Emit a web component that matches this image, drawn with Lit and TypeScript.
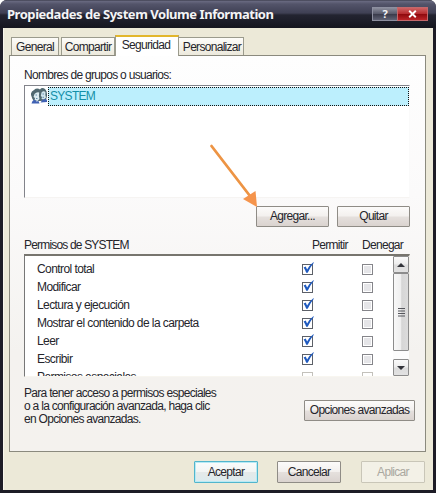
import { LitElement, html, css, svg } from "lit";
import { customElement, property } from "lit/decorators.js";

@customElement("check-box")
class CheckBox extends LitElement {
  @property({ type: Boolean }) checked = false;
  @property({ type: Boolean }) faded = false;
  static styles = css`
    :host { display: block; width: 11px; height: 11px; }
    svg { display: block; overflow: visible; }
  `;
  render() {
    const edge = this.faded ? "#c3c1bb" : this.checked ? "#5c6068" : "#85858a";
    return html`<svg width="11" height="11" viewBox="0 0 11 11">
      <rect x=".5" y=".5" width="10" height="10" fill="#fff" stroke=${edge} />
      ${this.checked
        ? svg`<path d="M1.6 3.4 L3.7 2.6 L5.1 5.4 Q7.5 1.300 11.300 -1.700 L11.900 -1.200 Q8.300 3 5.700 8.800 L4.200 8.800 Q3.300 5.800 1.600 3.400Z" fill="#1f5abf" />`
        : this.faded ? "" : svg`<rect x="2" y="2" width="7" height="7" fill="#e5e5e8" />`}
    </svg>`;
  }
}

const PERMS = [
  { name: "Control total", on: true },
  { name: "Modificar", on: true },
  { name: "Lectura y ejecución", on: true },
  { name: "Mostrar el contenido de la carpeta", on: true },
  { name: "Leer", on: true },
  { name: "Escribir", on: true },
  { name: "Permisos especiales", on: false },
];

@customElement("app-root")
class AppRoot extends LitElement {
  static styles = css`
    * { box-sizing: border-box; }
    :host {
      display: block; width: 436px; height: 493px; overflow: hidden; background: #fff;
      font: 12px/14px "Liberation Sans", Arial, sans-serif; letter-spacing: -.7px; color: #25252b; white-space: nowrap;
    }
    .window {
      position: relative; height: 493px; display: flex; flex-direction: column;
      background: #1d1c26; border-radius: 7px 7px 0 0; overflow: hidden; padding: 0 3px 3px;
    }
    .title {
      height: 28px; flex: none; margin: 0 -3px; padding: 0 8px 0 7px; display: flex; align-items: center; justify-content: space-between;
      background: linear-gradient(#30313f 0, #6a6b82 1px, #53546a 4px, #3f4054 13px, #232431 15px, #161720 27px);
      font: bold 13px/16px "Noto Sans", sans-serif; color: #f4f4f6; letter-spacing: 0;
    }
    .caption { letter-spacing: -.46px; }
    .controls { display: flex; }
    .ctl { height: 14px; display: flex; align-items: center; justify-content: center; border: 1px solid #8d8fa0; }
    .help { width: 25px; font-size: 11px; background: linear-gradient(#8b8d9c, #555768 50%, #3a3b4b 52%, #5f6274); border-right: 0; }
    .close { width: 31px; background: linear-gradient(#cf6263, #b5292d 50%, #8e090d 52%, #bb2428); border-color: #c4686b; }
    .body { flex: 1; background: #ece9d8; padding: 7px 5px 0 6px; border: 0 solid #f8f6ec; border-left-width: 1px; display: flex; flex-direction: column; }
    .tabs { display: flex; align-items: flex-end; height: 21px; flex: none; margin: 0 0 -1px -1px; padding-left: 2px; position: relative; }
    .tab { height: 18px; margin-bottom: 1px; border: 1px solid #9b9b8d; border-bottom: 0; background: linear-gradient(#fdfcf9, #ece9dc); text-align: center; line-height: 19px; }
    .active { height: 21px; margin-bottom: 0; background: #fff; border-top: 2px solid #e2b62c; line-height: 17px; padding-right: 2px; }
    .t1 { width: 48px; margin-right: 2px; } .t2 { width: 54px; } .t3 { width: 64px; } .t4 { width: 65px; border-left: 0; padding-left: 2px; }
    .panel {
      width: 417px; height: 397px; margin-left: -1px; border: 1px solid #8b8a7e; flex: none;
      background: linear-gradient(#fefefe, #fbfafa 35%, #f4f2ef 75%, #f4f2ee); padding: 12px 0 0 14px; display: flex; flex-direction: column;
    }
    .users { width: 386px; height: 113px; margin-top: 3px; border: 1px solid #82838a; border-right-color: #fafafa; border-bottom-color: #f6f4f2; background: #fff; padding: 1px 0 0 6px; flex: none; }
    .user { display: flex; }
    .people { width: 17px; height: 19px; display: block; flex: none; }
    .name { flex: 1; height: 19px; background: #bceffd; border: 1px dotted #111; color: #1390a8; line-height: 17px; padding-left: 1px; }
    .btns { display: flex; gap: 8px; margin: 8px 0 0 232px; }
    .btn {
      width: 73px; height: 21px; border: 1px solid #8f8c86; border-radius: 1px; text-align: center; line-height: 19px; color: #25252b;
      background: linear-gradient(#fcfbfa, #f3f0ee 48%, #e5e0dd 52%, #dad3cf);
    }
    .head { display: flex; height: 14px; margin-top: 11px; width: 386px; }
    .head .h1 { width: 288px; letter-spacing: -.82px; } .head .h2 { width: 50px; }
    .perms { width: 386px; height: 123px; flex: none; margin-top: 2px; border: 1px solid #777; border-top: 2px solid #77756e; border-right-color: #f3f1ec; border-bottom-color: #f8f6f0; background: #fff; display: flex; overflow: hidden; }
    .rows { flex: 1; padding: 4px 0 0 12px; letter-spacing: -.58px; }
    .row { display: grid; grid-template-columns: 265px 60px 11px; height: 18px; align-items: center; }
    .bar { width: 16px; display: flex; flex-direction: column; align-items: stretch; background: #fcfcfc; }
    .arrow, .thumb { border: 1px solid #8c8c8c; border-radius: 1px; display: flex; align-items: center; justify-content: center; background: linear-gradient(90deg, #f8f8f8, #efefef 48%, #d6d6d6 55%, #dcdcdc); flex: none; }
    .arrow { height: 17px; background: linear-gradient(#fafafa, #ededed 48%, #dcdcdc 52%, #e2e2e2); }
    .thumb { height: 78px; }
    .gap { flex: 1; }
    .foot { display: flex; margin-top: 10px; }
    .note { width: 280px; line-height: 13px; }
    .adv { width: 111px; margin-top: 13px; }
    .dialog { display: flex; margin: 9px 0 0 184px; }
    .dialog .btn { width: 64px; height: 22px; line-height: 20px; }
    .dialog .ok { border-color: #52b5cc; box-shadow: inset 0 0 0 1px #b8eaf5; background: linear-gradient(#fafcfc, #f3f5f4 48%, #e5e9e9 52%, #dcebee); }
    .dialog .cancel { margin: 0 20px 0 19px; }
    .dialog .off { background: #f3f1e7; border-color: #c9c6b8; color: #aaa89f; }
    .pointer { position: absolute; left: 205px; top: 140px; }
  `;
  render() {
    return html`<div class="window">
      <div class="title">
        <span class="caption">Propiedades de System Volume Information</span>
        <div class="controls">
          <div class="ctl help">?</div>
          <div class="ctl close"><svg width="9" height="8" viewBox="0 0 9 8"><path d="M1.2 .8 L7.8 7.2 M7.8 .8 L1.2 7.2" stroke="#fff" stroke-width="1.9" /></svg></div>
        </div>
      </div>
      <div class="body">
        <div class="tabs">
          <div class="tab t1">General</div><div class="tab t2">Compartir</div>
          <div class="tab active t3">Seguridad</div><div class="tab t4">Personalizar</div>
        </div>
        <div class="panel">
          <div>Nombres de grupos o usuarios:</div>
          <div class="users"><div class="user">
            <svg class="people" viewBox="0 0 17 19">
              <path d="M0 8 Q-.5 4.500 3 3 Q6 .5 9 2.500 Q11 0 14 2 Q16.500 4 16 9 L15 13 L10 14 L3 14 Q1 12 0 8Z" fill="#50686f" />
              <path d="M3.500 7 Q5.500 4.800 8.200 5.500 Q7.500 9 8.500 12 L6.500 14 L3.500 13 L4 11 L2.500 10Z" fill="#dcecf0" />
              <path d="M10.500 5.500 Q12.500 3.500 14.500 5 Q14 8 15 10.500 L13 12.500 L10.500 12 L11 10 L9.800 9Z" fill="#cfe4ec" />
              <path d="M4.500 8h1.500 M5 11.500h1.500 M11.500 7h1.500 M11.500 10.300h1.500" stroke="#5a86a6" stroke-width=".9" />
              <path d="M.500 16.500 Q1 13.500 3.500 12.500 L5.500 14.500 L7.500 14 L8.500 16.500Z M9.500 15.500 L11.500 12.800 L15 12 Q16.500 13 16 15Z" fill="#4062b4" />
            </svg>
            <div class="name">SYSTEM</div>
          </div></div>
          <div class="btns"><div class="btn">Agregar...</div><div class="btn">Quitar</div></div>
          <div class="head"><span class="h1">Permisos de SYSTEM</span><span class="h2">Permitir</span><span>Denegar</span></div>
          <div class="perms">
            <div class="rows">
              ${PERMS.map((p) => html`<div class="row">
                <span>${p.name}</span>
                <check-box ?checked=${p.on} ?faded=${!p.on}></check-box>
                <check-box ?faded=${!p.on}></check-box>
              </div>`)}
            </div>
            <div class="bar">
              <div class="arrow"><svg width="8" height="4"><path d="M0 4 L4 0 L8 4Z" fill="#33343a" /></svg></div>
              <div class="thumb"><svg width="7" height="9"><path d="M0 .5h7M0 3h7M0 5.500h7M0 8h7" stroke="#55565c" /></svg></div>
              <div class="gap"></div>
              <div class="arrow"><svg width="8" height="4"><path d="M0 0 L4 4 L8 0Z" fill="#33343a" /></svg></div>
            </div>
          </div>
          <div class="foot">
            <div class="note">Para tener acceso a permisos especiales<br />o a la configuración avanzada, haga clic<br />en Opciones avanzadas.</div>
            <div class="btn adv">Opciones avanzadas</div>
          </div>
        </div>
        <div class="dialog"><div class="btn ok">Aceptar</div><div class="btn cancel">Cancelar</div><div class="btn off">Aplicar</div></div>
      </div>
      <svg class="pointer" width="60" height="72" viewBox="0 0 60 72">
        <path d="M6.500 6 L45 56" stroke="#ed9444" stroke-width="2.800" stroke-linecap="round" />
        <path d="M52 67 L38 59 L50.500 51Z" fill="#f5944c" />
      </svg>
    </div>`;
  }
}
